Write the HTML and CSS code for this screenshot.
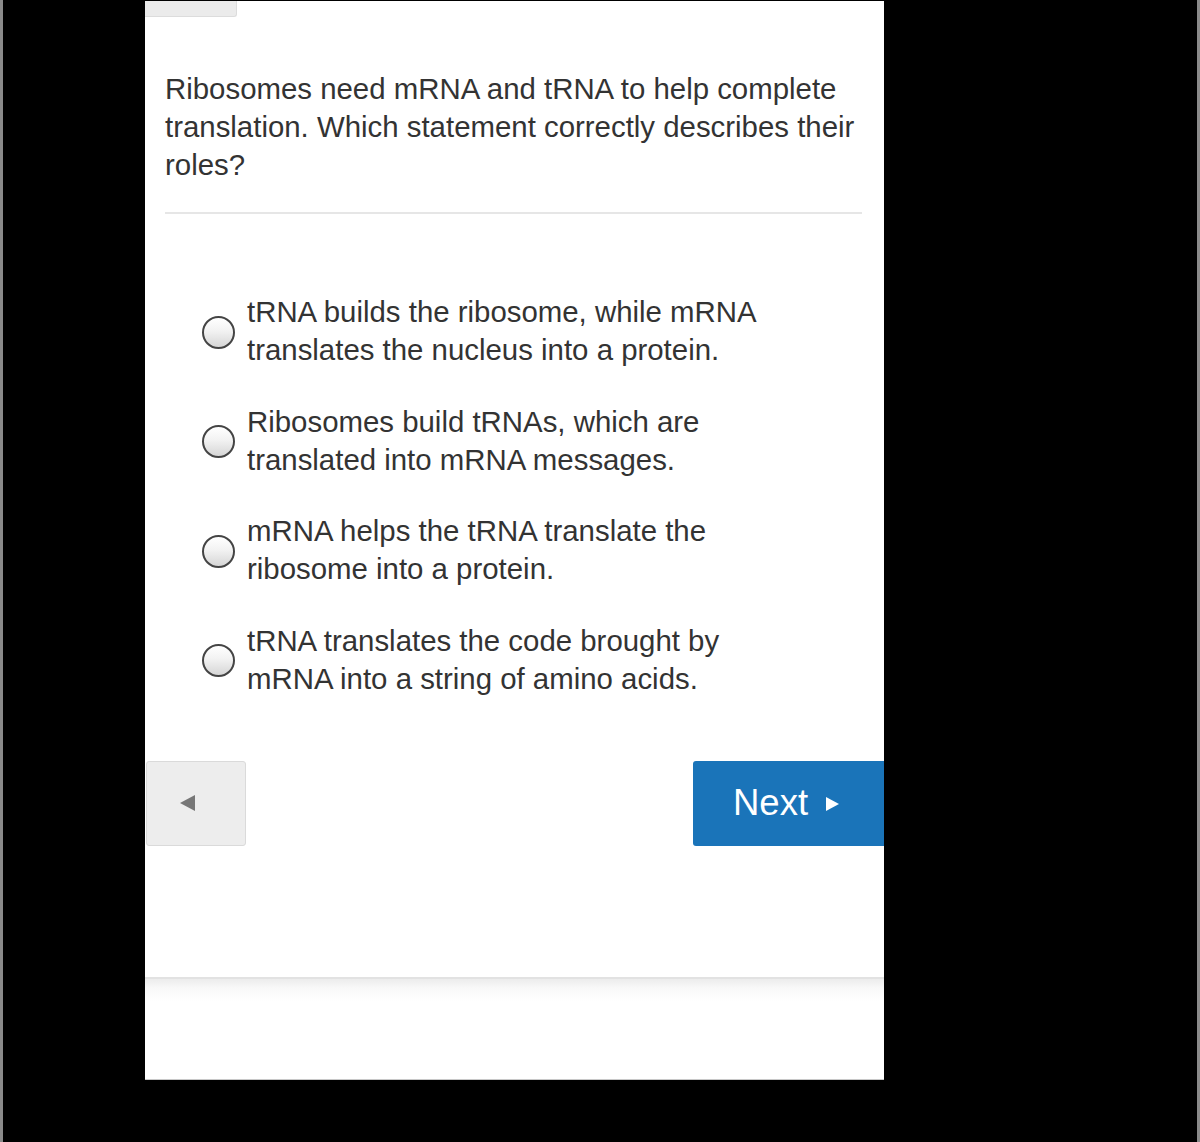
FILE: index.html
```html
<!DOCTYPE html>
<html>
<head>
<meta charset="utf-8">
<link rel="stylesheet" href="styles.css">
</head>
<body>
<div class="screen">
  <div class="edge"></div>
  <div class="panel">
    <div class="tab"></div>
    <p class="question">Ribosomes need mRNA and tRNA to help complete translation. Which statement correctly describes their roles?</p>
    <div class="divider"></div>
    <div class="options">
      <label class="option"><span class="radio"></span><span class="opt-text">tRNA builds the ribosome, while mRNA<br>translates the nucleus into a protein.</span></label>
      <label class="option"><span class="radio"></span><span class="opt-text">Ribosomes build tRNAs, which are<br>translated into mRNA messages.</span></label>
      <label class="option"><span class="radio"></span><span class="opt-text">mRNA helps the tRNA translate the<br>ribosome into a protein.</span></label>
      <label class="option"><span class="radio"></span><span class="opt-text">tRNA translates the code brought by<br>mRNA into a string of amino acids.</span></label>
    </div>
    <div class="nav">
      <button class="back"><span class="tri-left"></span></button>
      <button class="next"><span>Next</span><span class="tri-right"></span></button>
    </div>
    <div class="footer-line"></div>
  </div>
  <div class="spacer"></div>
  <div class="edge"></div>
</div>
</body>
</html>
```
FILE: styles.css
```css
html, body {
  margin: 0;
  padding: 0;
  background: #000;
}
.screen {
  display: flex;
  width: 1200px;
  height: 1142px;
  background: #000;
}
.edge {
  width: 3px;
  background: #8a8a8a;
}
.panel {
  margin-left: 142px;
  margin-top: 1px;
  width: 739px;
  height: 1078px;
  background: #fff;
  border-bottom: 1px solid #c8c8c8;
  display: flex;
  flex-direction: column;
  font-family: "Liberation Sans", Arial, sans-serif;
  color: #333;
}
.spacer {
  flex: 1;
}
.tab {
  width: 91px;
  height: 15px;
  background: #ebebeb;
  border: 1px solid #dcdcdc;
  border-top: none;
  border-left: none;
  border-bottom-right-radius: 3px;
}
.question {
  margin: 53px 20px 0 20px;
  font-size: 29.4px;
  line-height: 38px;
}
.divider {
  margin: 28px 22px 0 20px;
  height: 2px;
  background: #e6e6e6;
}
.options {
  margin-top: 79px;
  display: flex;
  flex-direction: column;
  gap: 33.5px;
  padding-left: 57px;
}
.option {
  display: flex;
  align-items: center;
  gap: 12px;
}
.radio {
  width: 29px;
  height: 29px;
  border: 2px solid #444;
  border-radius: 50%;
  background: linear-gradient(#ffffff 0%, #f2f2f2 45%, #d6d6d6 100%);
  flex: none;
  margin-top: 2px;
}
.opt-text {
  font-size: 29.4px;
  line-height: 38px;
  color: #333;
}
.nav {
  margin-top: 63px;
  display: flex;
  justify-content: space-between;
  align-items: flex-start;
}
.back {
  width: 100px;
  height: 85px;
  margin-left: 1px;
  background: #ededed;
  border: 1px solid #dadada;
  border-radius: 3px;
  display: flex;
  align-items: center;
  justify-content: center;
  padding: 0;
  padding-right: 18px;
}
.tri-left {
  width: 0;
  height: 0;
  border-top: 8px solid transparent;
  border-bottom: 8px solid transparent;
  border-right: 15px solid #777;
}
.next {
  width: 191px;
  height: 85px;
  background: #1a74b9;
  border: none;
  border-radius: 3px 0 0 3px;
  color: #fff;
  font-family: "Liberation Sans", Arial, sans-serif;
  font-size: 36.5px;
  padding: 0 0 0 40px;
  display: flex;
  align-items: center;
  justify-content: flex-start;
}
.tri-right {
  width: 0;
  height: 0;
  border-top: 7px solid transparent;
  border-bottom: 7px solid transparent;
  border-left: 13px solid #fff;
  margin-left: 18px;
  margin-top: 2px;
}
.footer-line {
  margin-top: 131px;
  height: 22px;
  border-top: 2px solid #e2e2e2;
  background: linear-gradient(#ececec, #f8f8f8 40%, #ffffff);
}
```
